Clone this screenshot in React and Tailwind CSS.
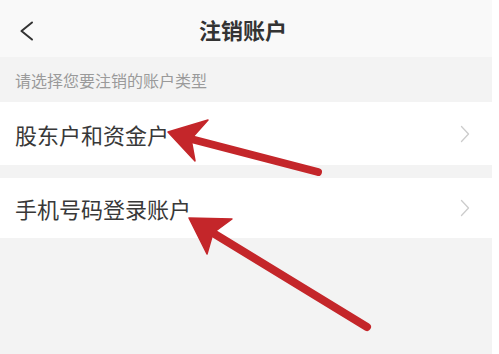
const rows = ['股东户和资金户', '手机号码登录账户']

function Arrow({ tip, left, right, notch, tail }) {
  return (
    <g>
      <line x1={notch[0]} y1={notch[1]} x2={tail[0]} y2={tail[1]} stroke="#c4262a" strokeWidth="8" strokeLinecap="round" />
      <polygon points={`${tip.join(',')} ${left.join(',')} ${notch.join(',')} ${right.join(',')}`} fill="#c4262a" stroke="#c4262a" strokeWidth="1.5" strokeLinejoin="round" />
    </g>
  )
}

export default function App() {
  return (
    <div className="relative w-[499px] h-[354px] bg-white overflow-hidden" style={{ fontFamily: '"Noto Sans CJK SC", "Noto Sans", sans-serif' }}>
      <div className="w-[492px] h-full bg-[#f3f3f3] flex flex-col">
        {/* header */}
        <div className="h-[57px] bg-[#f9f9f9] flex items-center relative">
          <svg className="absolute left-[19px] top-[21px]" width="15" height="20" viewBox="0 0 15 20">
            <polyline points="13,1.5 2.5,10 13,18.5" fill="none" stroke="#333" strokeWidth="2" strokeLinecap="round" strokeLinejoin="round" />
          </svg>
          <h1 className="flex-1 text-center text-[22px] font-bold text-[#333] leading-none pr-[6px]">注销账户</h1>
        </div>

        <div className="h-[45px] flex items-center px-[15px]">
          <p className="text-[16px] text-[#9a9a9a] leading-none">请选择您要注销的账户类型</p>
        </div>

        {/* rows */}
        <div className="flex flex-col gap-[13px]">
          {rows.map((label, i) => (
            <div key={i} className={`bg-white flex items-center justify-between pl-[15px] pr-[22px] ${i === 0 ? 'h-[63px]' : 'h-[60px]'}`}>
              <span className="text-[22px] text-[#383838] leading-none">{label}</span>
              <svg width="10" height="18" viewBox="0 0 10 18">
                <polyline points="1.5,1.5 8.5,9 1.5,16.5" fill="none" stroke="#cccccc" strokeWidth="1.3" strokeLinecap="round" strokeLinejoin="round" />
              </svg>
            </div>
          ))}
        </div>
      </div>

      {/* red annotation arrows */}
      <svg className="absolute inset-0 pointer-events-none" width="499" height="354" viewBox="0 0 499 354">
        <Arrow tip={[168, 132]} left={[208, 120]} right={[195, 161]} notch={[191, 139]} tail={[318, 172]} />
        <Arrow tip={[189, 218]} left={[232, 219]} right={[207, 254]} notch={[213, 233]} tail={[367, 327]} />
      </svg>
    </div>
  )
}
